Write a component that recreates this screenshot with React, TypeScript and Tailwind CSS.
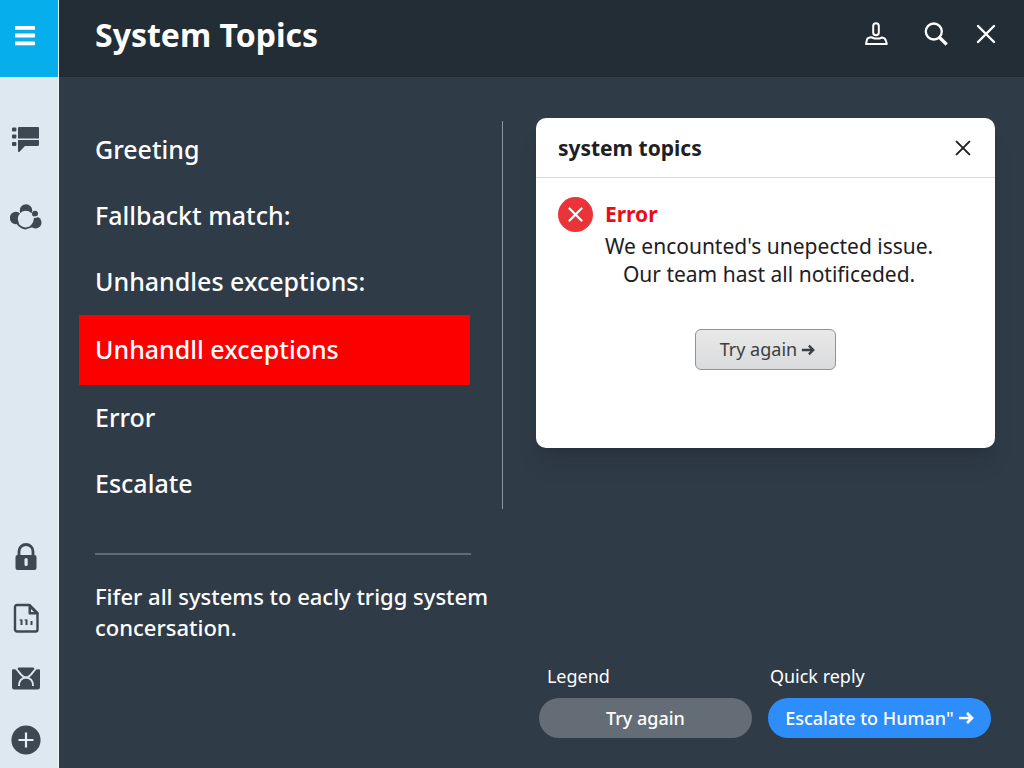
import React, { useState } from 'react';

const topics = [
  'Greeting',
  'Fallbackt match:',
  'Unhandles exceptions:',
  'Unhandll exceptions',
  'Error',
  'Escalate',
];

const MenuIcon = () => (
  <svg className="w-5 h-5" viewBox="0 0 20 20" fill="currentColor" aria-hidden="true">
    <rect x="0" y="0" width="20" height="3.8" rx="0.6" />
    <rect x="0" y="7.6" width="20" height="3.8" rx="0.6" />
    <rect x="0" y="15.4" width="20" height="3.8" rx="0.6" />
  </svg>
);

const ChatIcon = () => (
  <svg className="w-7 h-7" viewBox="0 0 28 28" fill="currentColor" aria-hidden="true">
    <rect x="0" y="2.5" width="4.4" height="4" rx="1" />
    <rect x="0" y="9.5" width="4.4" height="4" rx="1" />
    <rect x="0" y="17" width="4.4" height="4" rx="1" />
    <path d="M6 3a1 1 0 0 1 1-1h19a1 1 0 0 1 1 1v10.5H6z" />
    <path d="M6 15h21v4.5a1.5 1.5 0 0 1-1.5 1.5H13l-5.5 5.8a.9.9 0 0 1-1.5-.6z" />
  </svg>
);

const CloudIcon = () => (
  <svg className="w-8 h-8" viewBox="0 0 32 32" aria-hidden="true">
    <g fill="currentColor">
      <circle cx="16" cy="9.5" r="6.2" />
      <circle cx="6" cy="17" r="6.2" />
      <circle cx="25.5" cy="21.5" r="6" />
    </g>
    <circle cx="15.8" cy="17.8" r="8" fill="#dde8f0" />
    <path d="M7.5 22.5Q10 26.5 15.5 27.5L22 25.5" stroke="currentColor" strokeWidth="1.8" fill="none" />
    <circle cx="25" cy="12.8" r="3" fill="currentColor" />
    <path d="M22 17l9-2.5" stroke="#dde8f0" strokeWidth="1.3" />
  </svg>
);

const LockIcon = () => (
  <svg className="w-7 h-7" viewBox="0 0 28 28" aria-hidden="true">
    <path d="M7 12V7.5a7 7 0 0 1 14 0V12" fill="none" stroke="currentColor" strokeWidth="2.8" transform="translate(0 1)" />
    <rect x="3.5" y="12" width="21" height="15" rx="2" fill="currentColor" />
    <rect x="12.5" y="15" width="3.2" height="8" rx="1.6" fill="#dde8f0" />
  </svg>
);

const FileIcon = () => (
  <svg className="w-7 h-8" viewBox="0 0 28 32" fill="none" stroke="currentColor" aria-hidden="true">
    <path
      d="M5 3h12.5l8 8v16.5a2 2 0 0 1-2 2H5a2 2 0 0 1-2-2V5a2 2 0 0 1 2-2z"
      strokeWidth="2.4"
      strokeLinejoin="round"
    />
    <path d="M17.5 3v8.500h8z" fill="currentColor" strokeWidth="2" strokeLinejoin="round" />
    <path d="M19 7v3h3z" fill="#dde8f0" stroke="none" />
    <path d="M9.5 17.500v5.500M14.5 17.500v5.500M19.5 19v4" strokeWidth="2" />
    <path d="M7.5 18h2M12.5 18h2" strokeWidth="1" />
  </svg>
);

const MailIcon = () => (
  <svg className="w-[30px] h-6" viewBox="0 0 30 24" aria-hidden="true">
    <path
      d="M7.5.5h15L24 2.5l4-.3a1 1 0 0 1 1 1V20a2.5 2.5 0 0 1-2.5 2.5h-23A2.5 2.5 0 0 1 1 20V3.2a1 1 0 0 1 1-1l4 .3z"
      fill="currentColor"
    />
    <g fill="none" stroke="#dde8f0" strokeWidth="1.9">
      <path d="M5 2c3 1.500 5 8.500 10 8.500S22 3.500 25 2" />
      <path d="M8 19c-.5-5 3-8.500 7-8.500s7.5 3.500 7 8.500" />
    </g>
  </svg>
);

const PlusIcon = () => (
  <svg className="w-[30px] h-[30px]" viewBox="0 0 30 30" aria-hidden="true">
    <circle cx="15" cy="15" r="14.6" fill="currentColor" />
    <path d="M15 7.5v15M7.5 15h15" stroke="#e6eef4" strokeWidth="2.2" />
  </svg>
);

const UserIcon = () => (
  <svg
    className="w-6 h-6"
    viewBox="0 0 24 24"
    fill="none"
    stroke="currentColor"
    strokeWidth="2"
    strokeLinejoin="round"
    aria-hidden="true"
  >
    <rect x="9.2" y="1.2" width="5.6" height="12" rx="2.8" />
    <path d="M2 22l1-4.5C3.3 16 5 15.5 7.5 15.3l3 1.2h5l2.5-1c2.5.3 3.5 1.5 4 3.5l.8 3z" />
  </svg>
);

const SearchIcon = () => (
  <svg className="w-6 h-6" viewBox="0 0 24 24" fill="none" stroke="currentColor" aria-hidden="true">
    <circle cx="9.8" cy="9.5" r="8" strokeWidth="2.3" />
    <path d="M15.5 15.5l7.2 7" strokeWidth="3.2" />
  </svg>
);

const CloseIcon: React.FC<{ className: string; strokeWidth?: number }> = ({ className, strokeWidth = 2.4 }) => (
  <svg className={className} viewBox="0 0 20 20" fill="none" stroke="currentColor" strokeWidth={strokeWidth} aria-hidden="true">
    <path d="M2 2l16 16M18 2L2 18" strokeLinecap="round" />
  </svg>
);

const ArrowIcon: React.FC<{ className: string }> = ({ className }) => (
  <svg className={className} viewBox="0 0 16 16" fill="none" stroke="currentColor" strokeWidth="2.7" aria-hidden="true">
    <path d="M1 8h13M9 3l5 5-5 5" />
  </svg>
);

const SideButton: React.FC<{ label: string; children: React.ReactNode }> = ({ label, children }) => (
  <button type="button" aria-label={label} className="flex h-8 w-8 items-center justify-center cursor-pointer">
    {children}
  </button>
);

const Sidebar: React.FC = () => (
  <aside className="flex w-[59px] shrink-0 flex-col border-r border-[#eef4f8] bg-[#dde8f0] text-[#3d4853]">
    <button
      type="button"
      aria-label="Menu"
      className="flex h-[77px] items-center bg-[#06aeec] pl-[15px] pb-[6px] text-white cursor-pointer"
    >
      <MenuIcon />
    </button>
    <nav className="flex flex-1 flex-col justify-between px-[10px] pt-[46px] pb-3">
      <div className="flex flex-col gap-[46px]">
        <SideButton label="Conversations"><ChatIcon /></SideButton>
        <SideButton label="Cloud"><CloudIcon /></SideButton>
      </div>
      <div className="flex flex-col gap-[29px]">
        <SideButton label="Security"><LockIcon /></SideButton>
        <SideButton label="Reports"><FileIcon /></SideButton>
        <SideButton label="Mail"><MailIcon /></SideButton>
        <SideButton label="Add"><PlusIcon /></SideButton>
      </div>
    </nav>
  </aside>
);

const Header: React.FC = () => (
  <header className="flex h-[77px] items-center justify-between border-b border-[#1f2931] bg-[#232d35] pl-9 pr-7 pb-2 text-white">
    <h1 className="pt-[2px] text-[32px] leading-10 font-bold">System Topics</h1>
    <div className="flex items-center">
      <button type="button" aria-label="Account" className="mr-9 cursor-pointer"><UserIcon /></button>
      <button type="button" aria-label="Search" className="mr-7 cursor-pointer"><SearchIcon /></button>
      <button type="button" aria-label="Close" className="cursor-pointer"><CloseIcon className="w-5 h-5" /></button>
    </div>
  </header>
);

const ErrorCard: React.FC = () => (
  <section className="min-h-[330px] rounded-[10px] bg-white text-[#1d2024] shadow-xl">
    <div className="flex h-[60px] items-center justify-between border-b border-[#d5d8da] pl-[22px] pr-6">
      <h2 className="pt-[2px] text-[21px] font-bold">system topics</h2>
      <button type="button" aria-label="Dismiss" className="cursor-pointer"><CloseIcon className="w-4 h-4" /></button>
    </div>
    <div className="flex gap-3 pl-[22px] pt-[19px]">
      <span className="flex h-[35px] w-[35px] shrink-0 items-center justify-center rounded-full bg-[#eb333a] text-white">
        <CloseIcon className="w-[15px] h-[15px]" strokeWidth={3} />
      </span>
      <div>
        <h3 className="text-[21px] leading-[35px] font-bold text-[#e90d16]">Error</h3>
        <p className="text-center text-[21px] leading-7">
          We encounted's unepected issue.
          <br />
          Our team hast all notificeded.
        </p>
      </div>
    </div>
    <div className="mt-[41px] flex justify-center">
      <button
        type="button"
        className="flex h-[41px] items-center gap-1 rounded-md border border-[#909396] bg-linear-to-b from-[#e9e9ea] to-[#dadbdc] pl-6 pr-5 text-[18px] text-[#3b3e42] cursor-pointer"
      >
        Try again
        <ArrowIcon className="w-[14px] h-[14px]" />
      </button>
    </div>
  </section>
);

const App: React.FC = () => {
  const [selected, setSelected] = useState(3);

  return (
    <div className="flex min-h-screen bg-[#2f3b47] font-['Noto_Sans','Open_Sans',sans-serif]">
      <Sidebar />
      <div className="flex min-w-0 flex-1 flex-col">
        <Header />
        <main className="flex flex-1 pt-[41px] text-white">
          <div className="w-[46%] pl-5">
            <div className="-mt-px flex">
              <ul className="flex-1">
                {topics.map((topic, index) => (
                  <li key={topic}>
                    <button
                      type="button"
                      onClick={() => setSelected(index)}
                      className={`flex w-full items-center px-4 text-left text-[25px] font-medium cursor-pointer ${
                        selected === index ? 'h-[70px] bg-[#fc0000]' : 'h-[66px]'
                      }`}
                    >
                      {topic}
                    </button>
                  </li>
                ))}
              </ul>
              <div className="ml-8 mt-1 mb-2 w-px bg-[#8a97a3]"></div>
            </div>
            <hr className="ml-4 mr-8 mt-9 border-t-2 border-[#5f6d7a]" />
            <p className="mt-[26px] pl-4 text-[22px] leading-[31px] font-medium">
              Fifer all systems to eacly trigg system concersation.
            </p>
          </div>
          <div className="flex flex-1 flex-col justify-between pl-[33px] pr-[29px] pb-[30px]">
            <ErrorCard />
            <div className="flex gap-4 pr-1 pl-[3px]">
              <div className="grow-[21] basis-0">
                <p className="mb-2 pl-2 text-[18px] leading-7">Legend</p>
                <button type="button" className="h-10 w-full rounded-full bg-[#646c75] text-[18px] font-medium cursor-pointer">
                  Try again
                </button>
              </div>
              <div className="grow-[22] basis-0">
                <p className="mb-2 pl-[2px] text-[18px] leading-7">Quick reply</p>
                <button
                  type="button"
                  className="flex h-10 w-full items-center justify-center gap-1 rounded-full bg-[#2d8dfb] text-[18px] font-medium whitespace-nowrap cursor-pointer"
                >
                  Escalate to Human"
                  <ArrowIcon className="w-4 h-4" />
                </button>
              </div>
            </div>
          </div>
        </main>
      </div>
    </div>
  );
};

export default App;
